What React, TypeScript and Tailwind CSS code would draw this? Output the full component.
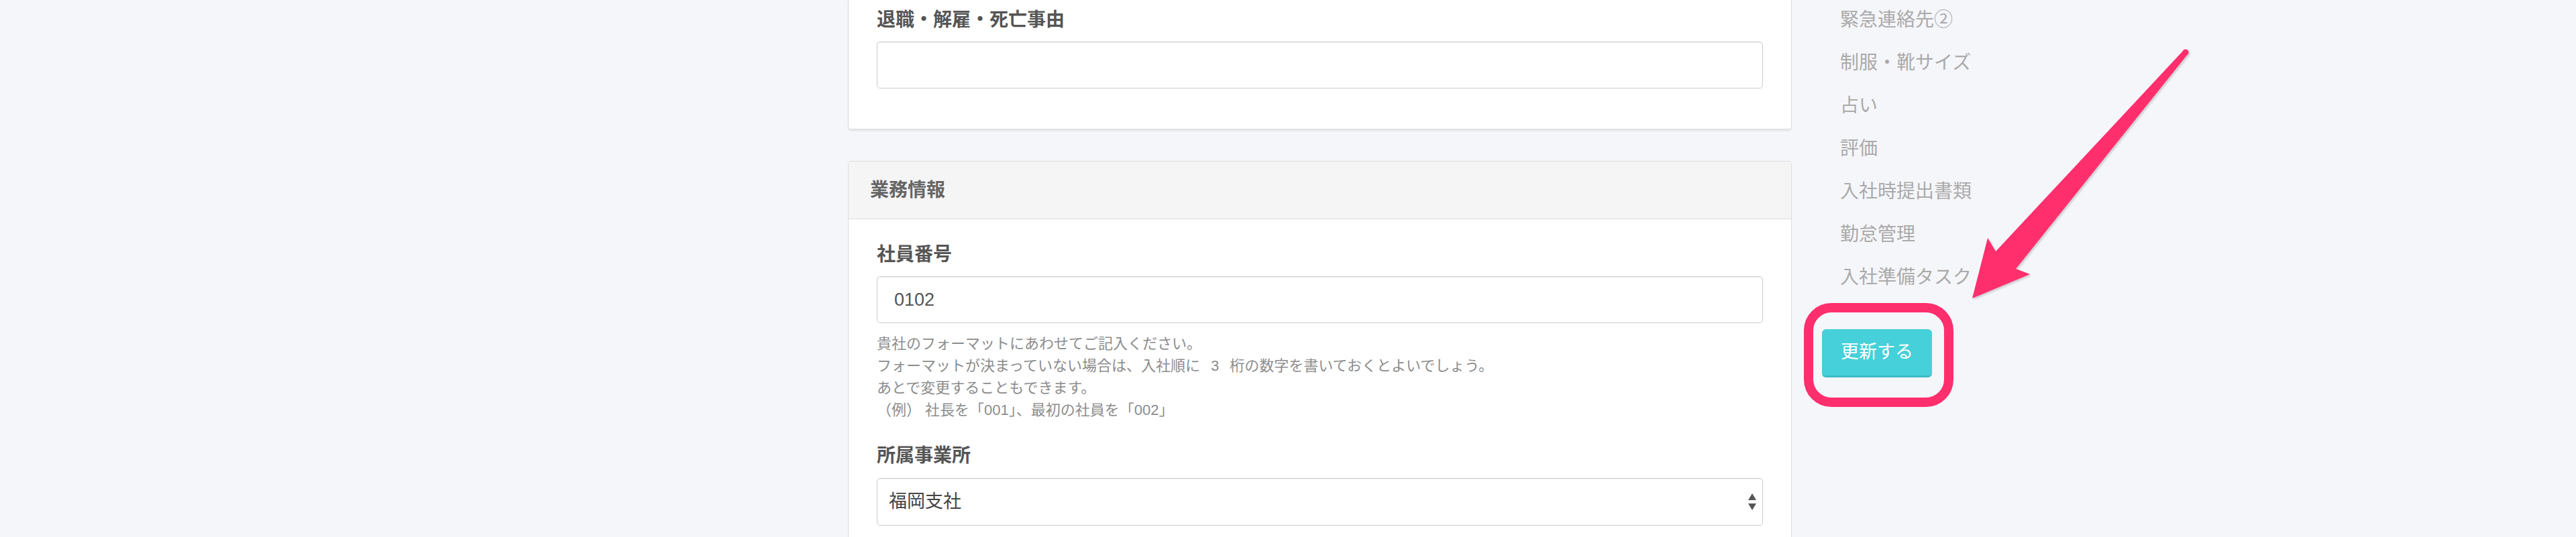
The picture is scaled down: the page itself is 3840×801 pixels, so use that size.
import React from 'react';

const FONT = '"Liberation Sans", "Noto Sans CJK JP", sans-serif';

const SIDE_LINKS = [
  '緊急連絡先②',
  '制服・靴サイズ',
  '占い',
  '評価',
  '入社時提出書類',
  '勤怠管理',
  '入社準備タスク',
];

function Label({ children }: { children: React.ReactNode }) {
  return <div className="text-[28px] leading-[40px] font-bold text-[#555]">{children}</div>;
}

function Annotation() {
  return (
    <svg
      className="absolute left-0 top-0 pointer-events-none"
      width={3840}
      height={801}
      viewBox="0 0 3840 801"
    >
      <defs>
        <filter id="ds" x="-10%" y="-10%" width="120%" height="120%">
          <feDropShadow dx="2" dy="2" stdDeviation="1.5" floodColor="#000" floodOpacity="0.18" />
        </filter>
      </defs>
      <g filter="url(#ds)" fill="#ff2e6d">
        <path d="M3255 75 L2975 375 L2963 355 L2940 445 L3026 409 L3005 401 L3261 81 Z" />
        <circle cx="3258" cy="78" r="4.5" />
      </g>
      <rect x="2696" y="459" width="209" height="141" rx="34" fill="none" stroke="#ff2e6d" strokeWidth="14" />
    </svg>
  );
}

export default function App() {
  return (
    <div className="relative h-[801px] w-[3840px] overflow-hidden bg-[#f5f6fa]" style={{ fontFamily: FONT }}>
      <div className="flex items-start pl-[1264px]">
        {/* main column */}
        <div className="w-[1407px] flex flex-col">
          {/* card 1 (scrolled, top cut off) */}
          <div className="bg-white border-x border-b border-[#dcdcdc] rounded-b-[5px] shadow-[0_3px_2px_rgba(0,0,0,0.06)] px-[42px] pt-[10px] pb-[60px]">
            <Label>退職・解雇・死亡事由</Label>
            <div className="mt-[12px] h-[70px] rounded-[5px] border border-[#cccccc] bg-white shadow-[inset_0_1px_1px_rgba(0,0,0,0.06)]" />
          </div>

          {/* card 2 */}
          <div className="mt-[47px] bg-white border border-[#dcdcdc] rounded-[5px]">
            <div className="h-[86px] flex items-center px-[32px] bg-[#f5f5f5] border-b border-[#dcdcdc] rounded-t-[5px]">
              <span className="text-[28px] font-bold text-[#666]">業務情報</span>
            </div>
            <div className="px-[42px] pt-[33px] pb-[40px]">
              <Label>社員番号</Label>
              <div className="mt-[12px] h-[70px] rounded-[5px] border border-[#cccccc] bg-white shadow-[inset_0_1px_1px_rgba(0,0,0,0.06)] flex items-center pl-[25px] text-[27px] text-[#555]">
                0102
              </div>
              <div className="mt-[14px] text-[22px] leading-[33px] text-[#8c8c8c]">
                <div>貴社のフォーマットにあわせてご記入ください。</div>
                <div>
                  フォーマットが決まっていない場合は、入社順に<span className="px-[16px]">3</span>桁の数字を書いておくとよいでしょう。
                </div>
                <div>あとで変更することもできます。</div>
                <div>（例） 社長を「001」、最初の社員を「002」</div>
              </div>

              <div className="mt-[32px]">
                <Label>所属事業所</Label>
              </div>
              <div className="mt-[13px] h-[71px] rounded-[5px] border border-[#cccccc] bg-white shadow-[inset_0_1px_1px_rgba(0,0,0,0.06)] flex items-center justify-between pl-[17px] pr-[9px] text-[27px] text-[#444]">
                <span>福岡支社</span>
                <svg width="12" height="26" viewBox="0 0 12 26">
                  <path d="M6 0 L12 10 L0 10 Z" fill="#555" />
                  <path d="M0 15 L12 15 L6 25 Z" fill="#555" />
                </svg>
              </div>
            </div>
          </div>
        </div>

        {/* sidebar */}
        <div className="ml-[45px] w-[400px] flex flex-col -mt-[2px]">
          {SIDE_LINKS.map(s => (
            <div key={s} className="h-[64px] leading-[64px] pl-[27px] text-[28px] text-[#aaaaaa] whitespace-nowrap">
              {s}
            </div>
          ))}
          <div className="mt-[45px]">
            <button className="w-[164px] h-[72px] rounded-[6px] bg-[#46d0d9] border-b-[3px] border-[#3bbcc5] text-white text-[27px] leading-none">
              更新する
            </button>
          </div>
        </div>
      </div>

      <Annotation />
    </div>
  );
}
